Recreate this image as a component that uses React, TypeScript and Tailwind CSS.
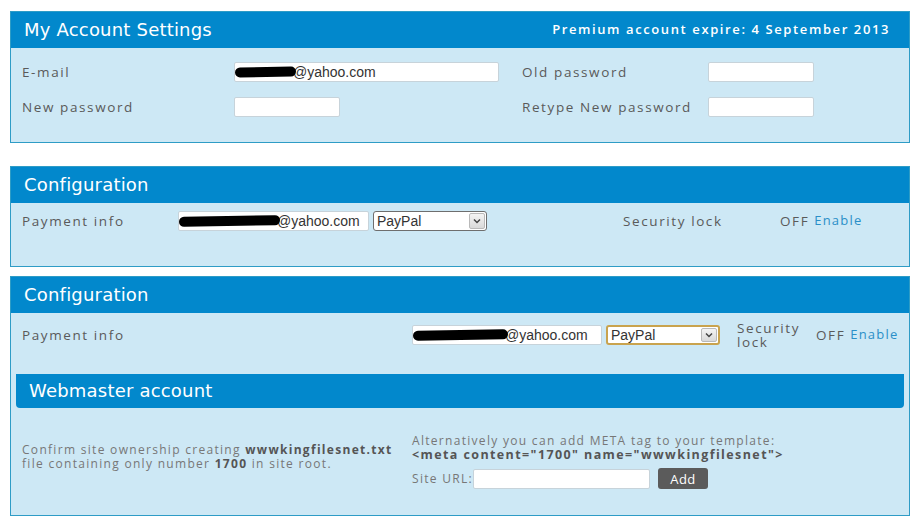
import React from "react";

const label = "text-[13.5px] text-[#5a5a5a] tracking-[1.6px] [font-family:'Open_Sans',sans-serif]";
const titleFont = "[font-family:'DejaVu_Sans',Verdana,sans-serif]";

function Input({ w, value, blob }: { w: number; value?: string; blob?: number }) {
  return (
    <div
      className="relative h-[20px] bg-white border border-[#c7d3da] rounded-[2px] flex items-center pl-[1px] text-[14px] text-[#333] tracking-normal [font-family:'Liberation_Sans',Arial,sans-serif] overflow-hidden"
      style={{ width: w }}
    >
      {value && <span className="whitespace-nowrap" style={{ paddingLeft: blob ? blob : 2 }}>{value}</span>}
      {blob ? (
        <span
          className="absolute left-[0px] top-[4px] h-[10px] bg-black rounded-full -rotate-[1deg]"
          style={{ width: blob + 4 }}
        />
      ) : null}
    </div>
  );
}

function Select({ w, focus }: { w: number; focus?: boolean }) {
  return (
    <div
      className={`h-[20px] bg-white rounded-[3px] flex items-stretch text-[14px] text-[#333] [font-family:'Liberation_Sans',Arial,sans-serif] ${
        focus ? "border-[2px] border-[#c9a34e]" : "border border-[#6e6e6e]"
      }`}
      style={{ width: w }}
    >
      <div className="flex-1 flex items-center pl-[3px] leading-none">PayPal</div>
      <div className="w-[16px] my-[1px] mr-[1px] rounded-[2px] border border-[#b9b9b9] bg-gradient-to-b from-[#f4f4f4] to-[#d9d9d9] flex items-center justify-center">
        <svg width="8" height="6" viewBox="0 0 8 6">
          <path d="M1 1.5 L4 4.5 L7 1.5" fill="none" stroke="#444" strokeWidth="1.5" />
        </svg>
      </div>
    </div>
  );
}

function Header({ title, right }: { title: string; right?: string }) {
  return (
    <div className="h-[36px] bg-[#0288cc] flex items-center justify-between pl-[13px] pr-[19px]">
      <span className={`text-white text-[18px] leading-[22px] tracking-[0.2px] ${titleFont}`}>{title}</span>
      {right && (
        <span className="text-white text-[13px] font-semibold tracking-[1.6px] [font-family:'Open_Sans',sans-serif]">{right}</span>
      )}
    </div>
  );
}

function Enable() {
  return (
    <span className="flex items-center gap-[5px] whitespace-nowrap">
      <span className={label}>OFF</span>
      <span className="text-[13px] text-[#2a8fc8] tracking-[1.2px] [font-family:'Open_Sans',sans-serif]">Enable</span>
    </span>
  );
}

const small = "text-[12px] leading-[14px] text-[#777] tracking-[1.3px] [font-family:'Open_Sans',sans-serif]";

export default function App() {
  return (
    <div className="w-[921px] h-[521px] bg-white pt-[11px] px-[10px] overflow-hidden">
      {/* Panel 1 */}
      <div className="w-[900px] border border-[#2e9cc6] bg-[#cde8f5]">
        <Header title="My Account Settings" right="Premium account expire: 4 September 2013" />
        <div className="pt-[14px] pb-[25px] pl-[11px] flex flex-col gap-[15px]">
          <div className="flex items-center h-[20px]">
            <span className={`${label} w-[212px]`}>E-mail</span>
            <Input w={265} value="@yahoo.com" blob={57} />
            <span className={`${label} w-[186px] ml-[23px]`}>Old password</span>
            <Input w={106} />
          </div>
          <div className="flex items-center h-[20px]">
            <span className={`${label} w-[212px]`}>New password</span>
            <Input w={106} />
            <span className={`${label} w-[186px] ml-[182px]`}>Retype New password</span>
            <Input w={106} />
          </div>
        </div>
      </div>

      {/* Panel 2 */}
      <div className="w-[900px] mt-[23px] border border-[#2e9cc6] bg-[#cde8f5]">
        <Header title="Configuration" />
        <div className="pt-[8px] pb-[35px] pl-[11px] flex items-center h-[63px]">
          <span className={`${label} w-[156px]`}>Payment info</span>
          <Input w={191} value="@yahoo.com" blob={97} />
          <div className="ml-[4px]">
            <Select w={114} />
          </div>
          <span className={`${label} ml-[136px] w-[157px]`}>Security lock</span>
          <Enable />
        </div>
      </div>

      {/* Panel 3 */}
      <div className="w-[900px] mt-[9px] border border-[#2e9cc6] bg-[#cde8f5]">
        <Header title="Configuration" />
        <div className="pt-[8px] pl-[11px] pr-[10px] flex items-center">
          <span className={`${label} w-[390px]`}>Payment info</span>
          <Input w={190} value="@yahoo.com" blob={91} />
          <div className="ml-[4px]">
            <Select w={114} focus />
          </div>
          <span className={`${label} ml-[17px] w-[79px] leading-[14px]`}>
            Security
            <br />
            lock
          </span>
          <Enable />
        </div>
        <div className="mt-[25px] mx-[5px] h-[34px] bg-[#0288cc] rounded-b-[4px] flex items-center pl-[13px]">
          <span className={`text-white text-[18px] leading-[22px] tracking-[0.2px] ${titleFont}`}>Webmaster account</span>
        </div>
        <div className="pt-[26px] pb-[26px] pl-[11px] flex">
          <div className={`w-[390px] pt-[9px] ${small}`}>
            Confirm site ownership creating <b className="text-[#555]">wwwkingfilesnet.txt</b>
            <br />
            file containing only number <b className="text-[#555]">1700</b> in site root.
          </div>
          <div className={small}>
            <div>Alternatively you can add META tag to your template:</div>
            <div className="font-bold text-[#555] text-[12.5px] tracking-[1.4px]">&lt;meta content="1700" name="wwwkingfilesnet"&gt;</div>
            <div className="flex items-center mt-[6px]">
              <span>Site URL:</span>
              <Input w={177} />
              <button className="ml-[8px] w-[50px] h-[21px] bg-[#5b5b5b] rounded-[3px] text-white text-[13px] tracking-[0.5px]">
                Add
              </button>
            </div>
          </div>
        </div>
      </div>
    </div>
  );
}
